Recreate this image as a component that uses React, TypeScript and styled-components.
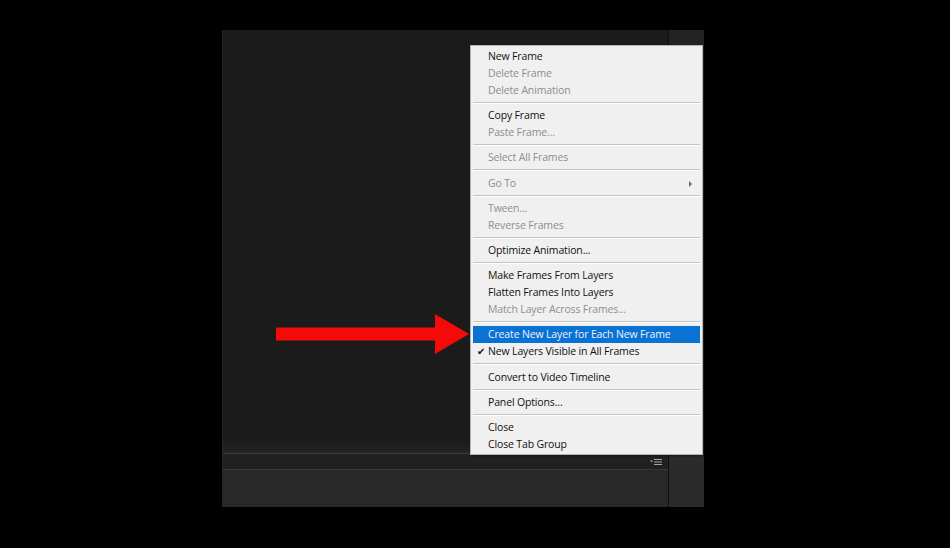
import React from "react";
import styled, { createGlobalStyle } from "styled-components";

const GlobalStyle = createGlobalStyle`
  html, body {
    margin: 0;
    padding: 0;
    background: #000;
  }
  body {
    width: 950px;
    height: 548px;
    overflow: hidden;
    font-family: "Open Sans", "Noto Sans", Arial, sans-serif;
  }
`;

const Stage = styled.div`
  position: relative;
  width: 950px;
  height: 548px;
  background: #000;
  padding: 30px 0 0 222px;
  box-sizing: border-box;
`;

const Panel = styled.div`
  width: 481px;
  height: 477px;
  display: grid;
  grid-template-columns: 445px 1px 35px;
  background: #1b1b1b;
  border-left: 1px solid #262626;
  box-sizing: border-box;
`;

const Main = styled.div`
  display: flex;
  flex-direction: column;
`;

const Canvas = styled.div`
  flex: 1;
  background: #1b1b1b;
`;

const Fade = styled.div`
  height: 12px;
  background: linear-gradient(#1b1b1b, #242424);
  border-bottom: 1px solid #3b3b3b;
`;

const Toolbar = styled.div`
  height: 15px;
  display: flex;
  justify-content: flex-end;
  align-items: center;
  padding-right: 6px;
  background: #202020;
  border-bottom: 1px solid #3a3a3a;
`;

const Footer = styled.div`
  height: 37px;
  background: #282828;
`;

const Divider = styled.div`
  background: #0f0f0f;
`;

const Side = styled.div`
  background: #2b2b2b;
  border-top: 15px solid #232323;
`;

const Menu = styled.div`
  position: absolute;
  left: 470px;
  top: 45px;
  width: 233px;
  height: 410px;
  box-sizing: border-box;
  padding: 2px 2px;
  background: #f0f0f0;
  border: 1px solid #b4b4b4;
  box-shadow: 1px 1px 2px rgba(0, 0, 0, 0.4);
  font-size: 10.5px;
  letter-spacing: -0.15px;
`;

const Item = styled.div<{ $disabled?: boolean; $active?: boolean }>`
  position: relative;
  height: 17px;
  line-height: 16px;
  padding-left: 15px;
  white-space: nowrap;
  color: ${(p) => (p.$active ? "#eaf3ff" : p.$disabled ? "#8e8e8e" : "#111")};
  background: ${(p) => (p.$active ? "#0a72d2" : "transparent")};
`;

const Check = styled.span`
  position: absolute;
  left: 4px;
  top: 0;
  font-size: 10px;
  color: #111;
`;

const SubArrow = styled.span`
  position: absolute;
  right: 8px;
  top: 6px;
  width: 0;
  height: 0;
  border-top: 3px solid transparent;
  border-bottom: 3px solid transparent;
  border-left: 3px solid #666;
`;

const Separator = styled.div`
  margin: 3px 0 3.2px;
  border-top: 1px solid #c4c4c4;
  border-bottom: 1px solid #ffffff;
`;

const Arrow = styled.svg`
  position: absolute;
  left: 276px;
  top: 314px;
`;

type Entry =
  | { label: string; disabled?: boolean; active?: boolean; checked?: boolean; sub?: boolean }
  | "sep";

const entries: Entry[] = [
  { label: "New Frame" },
  { label: "Delete Frame", disabled: true },
  { label: "Delete Animation", disabled: true },
  "sep",
  { label: "Copy Frame" },
  { label: "Paste Frame...", disabled: true },
  "sep",
  { label: "Select All Frames", disabled: true },
  "sep",
  { label: "Go To", disabled: true, sub: true },
  "sep",
  { label: "Tween...", disabled: true },
  { label: "Reverse Frames", disabled: true },
  "sep",
  { label: "Optimize Animation..." },
  "sep",
  { label: "Make Frames From Layers" },
  { label: "Flatten Frames Into Layers" },
  { label: "Match Layer Across Frames...", disabled: true },
  "sep",
  { label: "Create New Layer for Each New Frame", active: true },
  { label: "New Layers Visible in All Frames", checked: true },
  "sep",
  { label: "Convert to Video Timeline" },
  "sep",
  { label: "Panel Options..." },
  "sep",
  { label: "Close" },
  { label: "Close Tab Group" },
];

function FlyoutIcon() {
  return (
    <svg width="12" height="8" viewBox="0 0 12 8">
      <path d="M0 2.5h3l-1.5 2z" fill="#9a9a9a" />
      <rect x="4" y="1" width="8" height="1" fill="#a8a8a8" />
      <rect x="4" y="3.5" width="8" height="1" fill="#a8a8a8" />
      <rect x="4" y="6" width="8" height="1" fill="#a8a8a8" />
    </svg>
  );
}

export default function App() {
  return (
    <>
      <GlobalStyle />
      <Stage>
        <Panel>
          <Main>
            <Canvas />
            <Fade />
            <Toolbar>
              <FlyoutIcon />
            </Toolbar>
            <Footer />
          </Main>
          <Divider />
          <Side />
        </Panel>

        <Menu>
          {entries.map((e, i) =>
            e === "sep" ? (
              <Separator key={i} />
            ) : (
              <Item key={i} $disabled={e.disabled} $active={e.active}>
                {e.checked && <Check>✔</Check>}
                {e.label}
                {e.sub && <SubArrow />}
              </Item>
            )
          )}
        </Menu>

        <Arrow width="194" height="41" viewBox="0 0 194 41">
          <path d="M0 13.5H159V0L193 20L159 40V26.5H0Z" fill="#f50a0a" />
        </Arrow>
      </Stage>
    </>
  );
}
